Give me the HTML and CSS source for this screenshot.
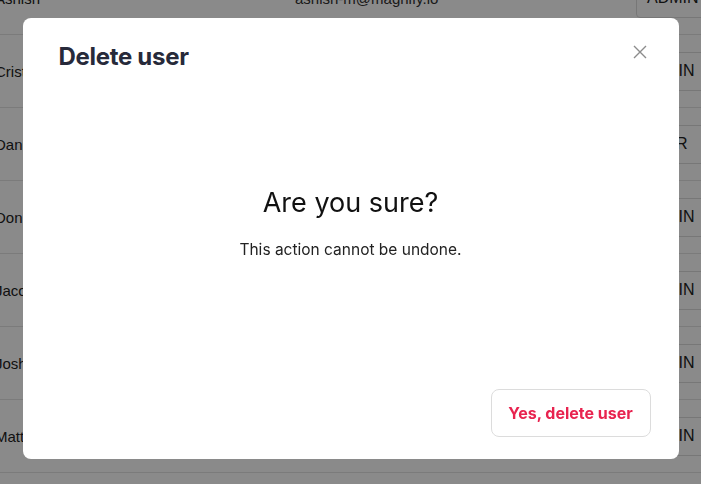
FILE: index.html
```html
<!DOCTYPE html>
<html lang="en">
<head>
<meta charset="UTF-8">
<meta name="viewport" content="width=device-width, initial-scale=1.0">
<title>Users</title>
<link rel="stylesheet" href="styles.css">
</head>
<body>
    <div class="users">
        <div class="user-row">
            <span class="name">Ashish</span>
            <span class="email">ashish-m@magnify.io</span>
            <span class="role first">ADMIN</span>
        </div>
        <div class="user-row">
            <span class="name">Cristian</span>
            <span class="email">cristian@magnify.io</span>
            <span class="role">ADMIN</span>
        </div>
        <div class="user-row">
            <span class="name">Daniel</span>
            <span class="email">daniel@magnify.io</span>
            <span class="role">USER</span>
        </div>
        <div class="user-row">
            <span class="name">Don</span>
            <span class="email">don@magnify.io</span>
            <span class="role">ADMIN</span>
        </div>
        <div class="user-row">
            <span class="name">Jacob</span>
            <span class="email">jacob@magnify.io</span>
            <span class="role">ADMIN</span>
        </div>
        <div class="user-row">
            <span class="name">Josh</span>
            <span class="email">josh@magnify.io</span>
            <span class="role">ADMIN</span>
        </div>
        <div class="user-row">
            <span class="name">Matt</span>
            <span class="email">matt@magnify.io</span>
            <span class="role">ADMIN</span>
        </div>
    </div>

    <div class="overlay">
        <div class="modal">
            <div class="modal-header">
                <h2>Delete user</h2>
                <button class="close" type="button" aria-label="Close">
                    <svg width="14" height="14" viewBox="0 0 14 14">
                        <path d="M1 1L13 13M13 1L1 13" stroke="#8c8c8c" stroke-width="1.4" fill="none"/>
                    </svg>
                </button>
            </div>
            <div class="modal-body">
                <h3>Are you sure?</h3>
                <p>This action cannot be undone.</p>
            </div>
            <div class="modal-footer">
                <button class="danger" type="button">Yes, delete user</button>
            </div>
        </div>
    </div>
</body>
</html>
```

FILE: styles.css
```css
html, body {
    height: 100%;
}
body {
    margin: 0;
    font-family: Inter, "Noto Sans", sans-serif;
    background-color: #fff;
    color: #222;
    overflow: hidden;
}
.users {
    margin-top: -38px;
    margin-left: -5px;
}
.user-row {
    display: flex;
    align-items: center;
    height: 72px;
    border-bottom: 1px solid #e4e4e4;
    font-family: "Liberation Sans", Arial, sans-serif;
    font-size: 15px;
}
.user-row span {
    flex-shrink: 0;
}
.user-row .name {
    width: 300px;
}
.user-row .email {
    width: 341px;
    color: #333;
}
.user-row .role {
    box-sizing: border-box;
    height: 39px;
    width: 100px;
    padding: 0 6px;
    border: 1px solid #ddd;
    border-radius: 4px;
    display: flex;
    align-items: center;
    font-size: 16px;
}
.user-row .role.first {
    padding: 0 10px;
}
.overlay {
    position: fixed;
    top: 0;
    left: 0;
    right: 0;
    bottom: 0;
    background-color: rgba(0, 0, 0, 0.46);
    display: flex;
    justify-content: center;
    align-items: flex-start;
    padding-top: 18px;
}
.modal {
    width: 656px;
    height: 441px;
    background-color: #fff;
    border-radius: 8px;
    display: flex;
    flex-direction: column;
    box-sizing: border-box;
}
.modal-header {
    display: flex;
    justify-content: space-between;
    align-items: flex-start;
    padding: 24px 31px 0 36px;
}
.modal-header h2 {
    margin: 0;
    font-size: 24px;
    line-height: 29px;
    font-weight: 700;
    color: #272a3a;
    letter-spacing: -0.3px;
}
.close {
    border: none;
    background: none;
    padding: 0;
    margin-top: 3px;
    width: 16px;
    height: 16px;
    cursor: pointer;
}
.modal-body {
    flex: 1;
    display: flex;
    flex-direction: column;
    align-items: center;
    justify-content: center;
    padding-bottom: 16px;
}
.modal-body h3 {
    margin: 0;
    font-size: 27px;
    font-weight: 400;
    color: #111;
}
.modal-body p {
    margin: 21px 0 0;
    font-size: 15.5px;
    color: #222;
}
.modal-footer {
    display: flex;
    justify-content: flex-end;
    padding: 0 28px 22px;
}
.danger {
    width: 160px;
    height: 48px;
    background-color: #fff;
    border: 1px solid #dcdcdc;
    border-radius: 8px;
    color: #e8234f;
    font-family: Inter, "Noto Sans", sans-serif;
    font-size: 16px;
    font-weight: 700;
    cursor: pointer;
}
```
